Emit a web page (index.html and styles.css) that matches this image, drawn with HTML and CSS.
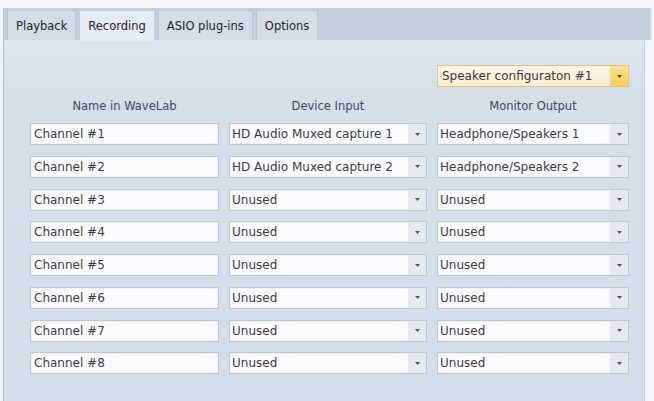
FILE: index.html
```html
<!DOCTYPE html>
<html>
<head>
<meta charset="utf-8">
<link rel="stylesheet" href="styles.css">
</head>
<body>
<div class="window">
  <div class="tabs">
    <div class="tab">Playback</div>
    <div class="tab active">Recording</div>
    <div class="tab">ASIO plug-ins</div>
    <div class="tab">Options</div>
  </div>
  <div class="panel">
    <div class="grid config-row">
      <div class="select config">
        <span class="value">Speaker configuraton #1</span>
        <span class="btn"><svg width="5" height="3" viewBox="0 0 5 3"><polygon points="0,0 5,0 2.5,3" fill="#5e4a1c"/></svg></span>
      </div>
    </div>
    <div class="grid header-row">
      <div class="hdr">Name in WaveLab</div>
      <div class="hdr">Device Input</div>
      <div class="hdr">Monitor Output</div>
    </div>
    <div class="rows" id="rows"></div>
  </div>
</div>
<script>
  var rows = [
    ["Channel #1", "HD Audio Muxed capture 1", "Headphone/Speakers 1"],
    ["Channel #2", "HD Audio Muxed capture 2", "Headphone/Speakers 2"],
    ["Channel #3", "Unused", "Unused"],
    ["Channel #4", "Unused", "Unused"],
    ["Channel #5", "Unused", "Unused"],
    ["Channel #6", "Unused", "Unused"],
    ["Channel #7", "Unused", "Unused"],
    ["Channel #8", "Unused", "Unused"]
  ];
  var arrow = '<span class="btn"><svg width="5" height="3" viewBox="0 0 5 3"><polygon points="0,0 5,0 2.5,3" fill="#4c545e"/></svg></span>';
  var html = "";
  rows.forEach(function (r) {
    html += '<div class="grid row">' +
      '<div class="field">' + r[0] + '</div>' +
      '<div class="select"><span class="value">' + r[1] + '</span>' + arrow + '</div>' +
      '<div class="select"><span class="value">' + r[2] + '</span>' + arrow + '</div>' +
      '</div>';
  });
  document.getElementById("rows").innerHTML = html;
</script>
</body>
</html>
```

FILE: styles.css
```css
html, body {
  margin: 0;
  padding: 0;
  background: #f3f6f9;
  font-family: "DejaVu Sans", Verdana, sans-serif;
  overflow: hidden;
}

.window {
  padding: 8px 3px 0 3px;
  height: 401px;
  box-sizing: border-box;
  display: flex;
  flex-direction: column;
}

.tabs {
  display: flex;
  align-items: flex-end;
  gap: 3px;
  height: 32px;
  padding-left: 3px;
  background: #c3cfdc;
  border-left: 1px solid #b3c0ce;
  box-sizing: border-box;
}

.tab {
  height: 30px;
  box-sizing: border-box;
  padding: 0 8px;
  display: flex;
  align-items: center;
  font-size: 11.5px;
  color: #1f2328;
  background: #d2dde8;
  border: 1px solid #b7c4d2;
  border-bottom: none;
}

.tab.active {
  height: 31px;
  margin-bottom: -1px;
  background: #e4ebf2;
  border-color: #c7d2dd;
  position: relative;
  z-index: 1;
}

.panel {
  flex: 1;
  background: linear-gradient(#dde6ef, #d4dfea 60px, #d3deea);
  border-left: 1px solid #aebccb;
  border-right: 1px solid #c5d0dc;
  padding: 25px 0 0 26px;
  margin-right: 6px;
}

.grid {
  display: grid;
  grid-template-columns: 189px 198px 192px;
  column-gap: 10px;
}

.config-row .config {
  grid-column: 3;
}

.header-row {
  margin-top: 11px;
  height: 16px;
  align-items: center;
}

.hdr {
  text-align: center;
  font-size: 11.5px;
  color: #3c4a5b;
}

.rows {
  margin-top: 9px;
  display: flex;
  flex-direction: column;
  gap: 10.75px;
}

.field, .select {
  height: 22px;
  box-sizing: border-box;
  border: 1px solid #bcc7d2;
  box-shadow: inset 0 0 0 1px #eef2f6;
  background: #fbfcfd;
  font-size: 12px;
  color: #383d44;
  line-height: 20px;
  white-space: nowrap;
  overflow: hidden;
}

.field {
  padding-left: 3px;
}

.select {
  display: flex;
}

.select .value {
  flex: 1;
  padding-left: 2px;
  overflow: hidden;
}

.select .btn {
  width: 18px;
  display: flex;
  align-items: center;
  justify-content: center;
  background: #e5eaf0;
}

.select.config {
  border-color: #e6c27c;
  box-shadow: none;
  background: linear-gradient(#fdf6e6, #fbeed3);
  color: #3a3a3a;
}

.select.config .value {
  padding-left: 4px;
}

.select.config .btn {
  background: linear-gradient(#fde08a, #f9cf5e);
}
```
